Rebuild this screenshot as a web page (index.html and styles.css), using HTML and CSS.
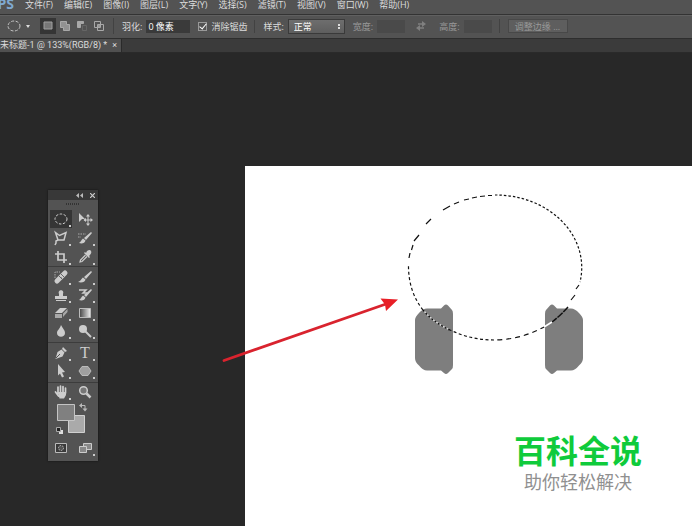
FILE: index.html
```
<!DOCTYPE html>
<html lang="zh-CN">
<head>
    <meta charset="UTF-8">
    <meta name="viewport" content="width=device-width, initial-scale=1.0">
    <title>未标题-1</title>
    <link rel="stylesheet" href="styles.css">
</head>
<body>
    <nav class="menu-bar">
        <span class="logo">PS</span>
        <a href="#">文件(F)</a>
        <a href="#">编辑(E)</a>
        <a href="#">图像(I)</a>
        <a href="#">图层(L)</a>
        <a href="#">文字(Y)</a>
        <a href="#">选择(S)</a>
        <a href="#">滤镜(T)</a>
        <a href="#">视图(V)</a>
        <a href="#">窗口(W)</a>
        <a href="#">帮助(H)</a>
    </nav>

    <div class="options-bar">
        <button class="preset" type="button" aria-label="椭圆选框工具">
            <svg width="26" height="16" viewBox="0 0 26 16"><ellipse cx="8" cy="8" rx="6" ry="5" fill="none" stroke="#c4c4c4" stroke-dasharray="3 1.5"/><path d="M20 7h4l-2 3z" fill="#ddd"/></svg>
        </button>
        <div class="modes">
            <button class="mode active" type="button" aria-label="新选区"><svg width="12" height="12" viewBox="0 0 12 12"><path d="M2 2h8v7H2z" fill="#777" stroke="#a0a0a0"/></svg></button>
            <button class="mode" type="button" aria-label="添加到选区"><svg width="12" height="12" viewBox="0 0 12 12"><path d="M1.5 1.5h6v3h3v6h-6v-3h-3z" fill="#919191" stroke="#a8a8a8"/></svg></button>
            <button class="mode" type="button" aria-label="从选区减去"><svg width="12" height="12" viewBox="0 0 12 12"><path d="M1.5 1.5h6v2h-3v4h-3z" fill="#a8a8a8" stroke="#a8a8a8"/><path d="M6.5 5.5h4v5h-4z" fill="none" stroke="#666"/></svg></button>
            <button class="mode" type="button" aria-label="与选区交叉"><svg width="12" height="12" viewBox="0 0 12 12"><path d="M1.5 1.5h6v6h-6zM4.5 4.5h6v6h-6z" fill="none" stroke="#a8a8a8"/><path d="M5 5h2v2H5z" fill="#999"/></svg></button>
        </div>
        <label class="field feather">羽化: <input type="text" value="0 像素"></label>
        <label class="check"><input type="checkbox" checked>消除锯齿</label>
        <label class="field style">样式:
            <select>
                <option>正常</option>
                <option>固定比例</option>
                <option>固定大小</option>
            </select>
        </label>
        <label class="field size">宽度: <input type="text" disabled></label>
        <button class="swap" type="button" aria-label="高度和宽度互换" disabled>
            <svg width="12" height="12" viewBox="0 0 12 12"><path d="M3 4h5M4 8h5" stroke="#808080" stroke-width="1.5"/><path d="M7 1l4 3-4 3zM5 5L1 8l4 3z" fill="#808080"/></svg>
        </button>
        <label class="field size">高度: <input type="text" disabled></label>
        <div class="refine"><button type="button" disabled>调整边缘 ...</button></div>
    </div>

    <div class="tab-bar">
        <div class="tab">未标题-1 @ 133%(RGB/8) * <button type="button" aria-label="关闭">×</button></div>
    </div>

    <main class="workspace">
        <div class="document">
            <svg class="drawing" width="400" height="240" viewBox="0 0 400 240">
                <g fill="#7e7e7e">
                    <path id="cup" d="M182 142.500H196L199 139.500Q201 137.500 203 139.500L207 144Q208 145 208 148V199Q208 202 207 203L203 207Q201 209 199 207L196 204.500H182Q178 204.500 174 199.500Q170 196 170 192V154Q170 151 174 147Q178 142.500 182 142.500Z"/>
                    <use href="#cup" transform="translate(508 0) scale(-1 1)"/>
                </g>
                <g fill="none" stroke="#111" stroke-width="1.200">
                    <path d="M250 29A86 72.500 0 0 1 335 116" stroke-dasharray="2.500 2"/>
                    <path d="M334 119L331 123M330 129L326 134"/>
                    <path d="M323 141Q316 149 307 156" stroke-width="1.500" stroke-dasharray="7 1"/>
                    <path d="M300 160.500Q275 174 249 174" stroke-dasharray="5 4"/>
                    <path d="M249 174Q226 174 205 164" stroke-dasharray="3 2.500"/>
                    <path d="M178 144Q189 157 205 164" stroke="#ddd"/>
                    <path d="M178 144Q189 157 205 164" stroke-width="1.500" stroke-dasharray="2 2"/>
                    <path d="M178 144Q163 125 163.500 98" stroke-dasharray="3 2.500"/>
                    <path d="M164 92L165 87M166.500 84L168 79M169 75L174 69M181 58L186 53M198 44L205 40M209 38L214 36M219 34L224 33M227 32L232 31M235 30.500L240 30M243 29.500H247"/>
                    <path d="M307 156L299 161" stroke="#fff" stroke-width="1.500"/>
                </g>
            </svg>
            <div class="brand">
                <strong>百科全说</strong>
                <span>助你轻松解决</span>
            </div>
        </div>

        <svg class="pointer" width="400" height="320" viewBox="0 0 400 320">
            <path d="M224 307.500L386 251" stroke="#d9232e" stroke-width="2.800" stroke-linecap="round"/>
            <path d="M398 246.500L380.500 245.500L385 251.500L386 258Z" fill="#e81f27"/>
        </svg>

        <aside class="toolbox">
            <header>
                <button type="button" aria-label="折叠"><svg width="7" height="5" viewBox="0 0 7 5"><path d="M3 0v5L0 2.500zM7 0v5L4 2.500z" fill="#bbb"/></svg></button>
                <button type="button" aria-label="关闭"><svg width="5" height="5" viewBox="0 0 5 5"><path d="M0 0l5 5M5 0L0 5" stroke="#ccc" stroke-width="1.200"/></svg></button>
            </header>
            <div class="grip"></div>
            <div class="tools select-tools">
                <button class="tool more active" type="button" aria-label="椭圆选框"><svg viewBox="0 0 16 16"><ellipse cx="8" cy="8" rx="6" ry="5" fill="none" stroke="#d0d0d0" stroke-dasharray="2.500 1.500"/></svg></button>
                <button class="tool" type="button" aria-label="移动"><svg viewBox="0 0 16 16"><path d="M2 2l6 6H5l-3 3z"/><path d="M11 5v8M7 9h8" stroke="#ccc"/><path d="M11 3l2 2.500H9zM11 15l2-2.500H9zM16 9l-2.500-2v4zM6.500 9L9 7v4z"/></svg></button>
                <button class="tool more" type="button" aria-label="套索"><svg viewBox="0 0 16 16"><path d="M2.500 2.500l4 3 6.500-3-2 7.500H5zM5 10l-2 1v2l-1 2" fill="none" stroke="#ccc" stroke-width="1.500"/></svg></button>
                <button class="tool more" type="button" aria-label="快速选择"><svg viewBox="0 0 16 16"><path d="M1 4h8M1 7h3" stroke="#aaa" stroke-dasharray="1.500 1"/><path d="M14 2l1 1-6 7-2-2zM6 8.500l2.500 2C8 13 5 14 2 13c2-1 2-3 4-4.500z"/></svg></button>
                <button class="tool more" type="button" aria-label="裁剪"><svg viewBox="0 0 16 16"><path d="M5 2v9h9M2 5h9v9" fill="none" stroke="#ccc" stroke-width="1.700"/></svg></button>
                <button class="tool more" type="button" aria-label="吸管"><svg viewBox="0 0 16 16"><path d="M10 2q3-2 4 0t-1 4l-1 1 1 1-1 1-5-5 1-1 1 1z"/><path d="M8.500 6l-5 5-.5 2 2-.5 5-5" fill="none" stroke="#ccc" stroke-width="1.200"/></svg></button>
            </div>
            <div class="tools paint-tools">
                <button class="tool more" type="button" aria-label="修复画笔"><svg viewBox="0 0 16 16"><path d="M2 9V3h5" fill="none" stroke="#aaa" stroke-dasharray="1.500 1"/><path d="M4 12l8-8" stroke="#ccc" stroke-width="5" stroke-linecap="round"/><path d="M6 7l3 3M8 5l3 3M7.500 8.500h1" stroke="#666"/></svg></button>
                <button class="tool more" type="button" aria-label="画笔"><svg viewBox="0 0 16 16"><path d="M14 2l1 1-6 7-2-2zM6 8.500l2.500 2C8 13 5 14 1 13c3-1 3-3 5-4.500z"/></svg></button>
                <button class="tool more" type="button" aria-label="仿制图章"><svg viewBox="0 0 16 16"><path d="M6 7C4 2 12 2 10 7v2h4v3H2V9h4zM3 13h10v1H3z"/></svg></button>
                <button class="tool more" type="button" aria-label="历史记录画笔"><svg viewBox="0 0 16 16"><path d="M2 3h7L6 6h4" fill="none" stroke="#ccc" stroke-width="1.500"/><path d="M14 2l1 1-6 7-2-2zM6 8.500l2.500 2C8 13 5 14 2 13c2-1 2-3 4-4.500z"/></svg></button>
                <button class="tool more" type="button" aria-label="橡皮擦"><svg viewBox="0 0 16 16"><path d="M7 3h7l-5 5H2z"/><path d="M2 9h7v4H2zM10 8.500L14.500 4v3L10 12z" fill="#a8a8a8"/></svg></button>
                <button class="tool more" type="button" aria-label="渐变"><svg viewBox="0 0 16 16"><defs><linearGradient id="fade"><stop offset="0" stop-color="#444"/><stop offset="1" stop-color="#eee"/></linearGradient></defs><path d="M2.500 3.500h11v9h-11z" fill="url(#fade)" stroke="#bbb"/></svg></button>
                <button class="tool more" type="button" aria-label="模糊"><svg viewBox="0 0 16 16"><path d="M8 2c2 4 4 5 4 8 0 5-8 5-8 0 0-3 3-4 4-8z"/></svg></button>
                <button class="tool more" type="button" aria-label="减淡"><svg viewBox="0 0 16 16"><circle cx="6" cy="6" r="4"/><path d="M8 8l6 6" stroke="#ccc" stroke-width="2"/></svg></button>
            </div>
            <div class="tools vector-tools">
                <button class="tool more" type="button" aria-label="钢笔"><svg viewBox="0 0 16 16"><path d="M10 2l4 4-2 1-3-3zM8.500 4.500l3 3-2 4-7 2.500 2-7z"/><path d="M3 13l4-4" stroke="#555"/></svg></button>
                <button class="tool more type" type="button" aria-label="文字">T</button>
                <button class="tool more" type="button" aria-label="路径选择"><svg viewBox="0 0 16 16"><path d="M5 1l7 8-3 .5 2 4-2 1-2-4-2 2z"/></svg></button>
                <button class="tool more" type="button" aria-label="多边形"><svg viewBox="0 0 16 16"><path d="M5 3.500h6L14 8l-3 4.500H5L2 8z" fill="#a0a0a0" stroke="#bbb"/></svg></button>
            </div>
            <div class="tools view-tools">
                <button class="tool more" type="button" aria-label="抓手"><svg viewBox="0 0 16 16"><path d="M5 9V3M7.500 8V2M10 8V2.500M12.500 9V4M5.500 12L2.500 8" stroke="#d0d0d0" stroke-width="1.700" stroke-linecap="round"/><path d="M4.500 8h8.500v3l-2 3.500H6.500z"/></svg></button>
                <button class="tool" type="button" aria-label="缩放"><svg viewBox="0 0 16 16"><circle cx="6.500" cy="6.500" r="3.800" fill="#777" stroke="#ccc" stroke-width="1.500"/><path d="M9.500 9.500l4 4" stroke="#ccc" stroke-width="2.500"/></svg></button>
            </div>
            <div class="colors">
                <svg width="34" height="32" viewBox="0 0 34 32">
                    <path d="M12.500 12.500h16v17h-16z" fill="#aaa" stroke="#d0d0d0"/>
                    <path d="M1.500 1.500h17v16h-17z" fill="#808080" stroke="#c4c4c4"/>
                    <path d="M25 2.500h4v4" fill="none" stroke="#bbb"/><path d="M26 0v5l-3-2.500zM26.500 5.500h5L29 8.500z" fill="#bbb"/>
                    <path d="M3 27h4v4H3z" fill="#ddd"/><path d="M.5 24.500h4v4h-4z" fill="#222" stroke="#aaa"/>
                </svg>
            </div>
            <div class="tools screen-tools">
                <button class="tool" type="button" aria-label="快速蒙版"><svg viewBox="0 0 16 16"><path d="M2.500 3.500h11v9h-11z" fill="#3a3a3a" stroke="#bbb"/><circle cx="8" cy="8" r="2.500" fill="#555" stroke="#bbb" stroke-dasharray="1.500 1"/></svg></button>
                <button class="tool more" type="button" aria-label="屏幕模式"><svg viewBox="0 0 16 16"><path d="M6.500 3.500h8v6h-8z" fill="#888" stroke="#ccc"/><path d="M2.500 6.500h7v6h-7z" fill="#888" stroke="#ccc"/></svg></button>
            </div>
        </aside>
    </main>
</body>
</html>
```
FILE: styles.css
```
* {
    box-sizing: border-box;
}
body {
    display: flex;
    flex-direction: column;
    height: 100vh;
    margin: 0;
    overflow: hidden;
    background-color: #282828;
    color: #dcdcdc;
    font-family: "Open Sans", "Noto Sans CJK SC", sans-serif;
    font-size: 9px;
}
button, input, select {
    margin: 0;
    padding: 0;
    border: none;
    background: none;
    color: inherit;
    font: inherit;
}
svg {
    display: block;
}
.menu-bar {
    display: flex;
    flex: none;
    gap: 11px;
    height: 15px;
    line-height: 9px;
    white-space: nowrap;
    background-color: #535353;
    border-bottom: 1px solid #333;
}
.menu-bar a {
    color: #dcdcdc;
    text-decoration: none;
}
.logo {
    display: flex;
    justify-content: flex-end;
    width: 14px;
    color: #7fa9d0;
    font-size: 14px;
    font-weight: bold;
    line-height: 8px;
}

/* options bar */
.options-bar {
    display: flex;
    flex: none;
    align-items: center;
    height: 24px;
    padding: 0 0 2px 6px;
    white-space: nowrap;
    background-color: #535353;
    border-top: 1px solid #606060;
    border-bottom: 1px solid #2e2e2e;
}
.modes {
    display: flex;
    gap: 1px;
    margin-left: 8px;
    padding-right: 6px;
    border-right: 1px solid #424242;
}
.mode {
    display: flex;
    align-items: center;
    justify-content: center;
    width: 16px;
    height: 16px;
}
.mode.active {
    background-color: #353535;
}
.field {
    display: flex;
    align-items: center;
    gap: 4px;
}
.field input {
    width: 28px;
    height: 13px;
    background-color: #4a4a4a;
}
.feather {
    margin-left: 8px;
}
.feather input {
    width: 44px;
    padding-left: 2px;
    background-color: #3a3a3a;
    color: #fff;
}
.check {
    display: flex;
    align-items: center;
    gap: 4px;
    margin-left: 8px;
    padding-right: 7px;
    border-right: 1px solid #424242;
}
.check input {
    display: flex;
    align-items: center;
    justify-content: center;
    width: 9px;
    height: 9px;
    appearance: none;
    border: 1px solid #999;
}
.check input:checked::before {
    content: "";
    width: 3px;
    height: 6px;
    margin-bottom: 2px;
    border: solid #fff;
    border-width: 0 1px 1px 0;
    transform: rotate(40deg);
}
.style {
    margin-left: 8px;
}
.style select {
    width: 57px;
    height: 15px;
    padding-left: 5px;
    appearance: none;
    border: 1px solid #3a3a3a;
    color: #fff;
    background:
        conic-gradient(from 153deg at 50% 0, #ddd 54deg, transparent 0) right 3px top 3px / 4px 3px no-repeat,
        conic-gradient(from -27deg at 50% 100%, #ddd 54deg, transparent 0) right 3px bottom 3px / 4px 3px no-repeat,
        linear-gradient(#6e6e6e, #5e5e5e);
}
.size {
    margin-left: 8px;
    color: #999;
}
.swap {
    margin: 0 4px 0 10px;
}
.refine {
    margin-left: 7px;
    padding-left: 8px;
    border-left: 1px solid #424242;
}
.refine button {
    display: block;
    width: 60px;
    height: 14px;
    border: 1px solid #484848;
    background-color: #5e5e5e;
    color: #999;
    line-height: 11px;
}

/* document tabs */
.tab-bar {
    display: flex;
    flex: none;
    height: 14px;
    background-color: #3b3b3b;
    border-bottom: 1px solid #2a2a2a;
}
.tab {
    display: flex;
    gap: 5px;
    padding-right: 4px;
    font-family: Roboto, "Noto Sans CJK SC", sans-serif;
    line-height: 13px;
    white-space: nowrap;
    background-color: #505050;
    border-right: 1px solid #2a2a2a;
}

/* canvas */
.workspace {
    position: relative;
    display: flex;
    flex: 1;
    padding: 113px 0 0 245px;
}
.document {
    display: flex;
    flex: 1;
    flex-direction: column;
    background-color: #fff;
}
.drawing {
    flex: none;
}
.brand {
    display: flex;
    flex-direction: column;
    align-items: center;
    align-self: flex-end;
    margin: 22px 50px 0 0;
    font-family: "Noto Sans CJK SC", sans-serif;
}
.brand strong {
    color: #0fcb3b;
    font-size: 32px;
    font-weight: bold;
    line-height: 42px;
}
.brand span {
    color: #909090;
    font-size: 18px;
    line-height: 22px;
}
.pointer {
    position: absolute;
    top: 0;
    left: 0;
}

/* floating toolbox */
.toolbox {
    position: absolute;
    top: 137px;
    left: 48px;
    width: 50px;
    padding-bottom: 4px;
    background-color: #535353;
    box-shadow: 0 0 2px #111;
}
.toolbox header {
    display: flex;
    align-items: center;
    justify-content: flex-end;
    gap: 7px;
    height: 10px;
    padding-right: 3px;
    background-color: #383838;
}
.grip {
    width: 14px;
    height: 2px;
    margin: 3px auto 5px;
    background: repeating-linear-gradient(90deg, #333 0, #333 1px, #555 1px, #555 2px);
}
.tools {
    display: grid;
    grid-template-columns: 22px 22px;
    column-gap: 2px;
    padding: 0 2px;
    border-bottom: 1px solid #3c3c3c;
}
.select-tools {
    row-gap: 1px;
}
.paint-tools,
.vector-tools {
    padding-top: 1px;
    padding-bottom: 2px;
}
.view-tools,
.screen-tools {
    border-bottom: none;
}
.tool {
    position: relative;
    display: flex;
    align-items: center;
    justify-content: center;
    height: 18px;
    fill: #ccc;
}
.tool svg {
    width: 16px;
    height: 16px;
}
.tool.active {
    background-color: #353535;
}
.tool.more::after {
    content: "";
    position: absolute;
    right: 1px;
    bottom: 1px;
    width: 2px;
    height: 2px;
    background-color: #ccc;
}
.type {
    color: #ccc;
    font-family: "Liberation Serif", serif;
    font-size: 16px;
}
.colors {
    padding: 2px 0 4px 8px;
}
```
